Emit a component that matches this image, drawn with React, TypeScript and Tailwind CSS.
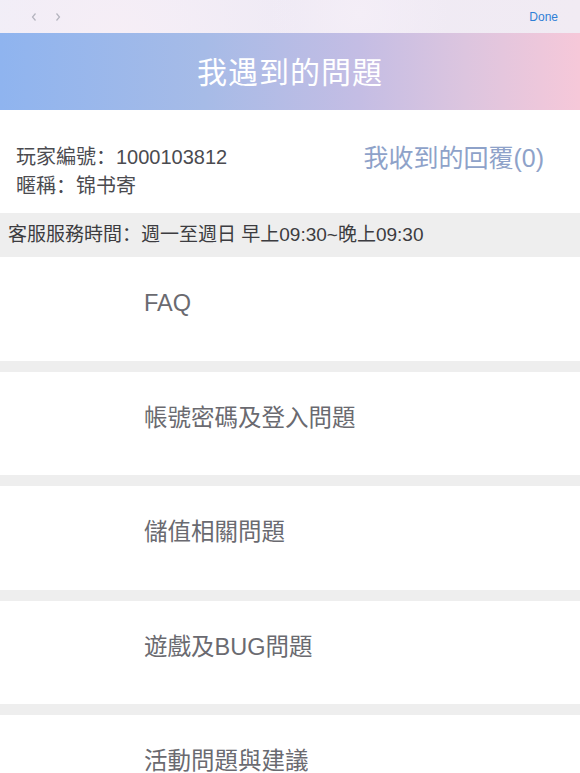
import React from 'react';

const font = "font-['Liberation_Sans','Noto_Sans_CJK_SC',sans-serif]";

export default function App() {
  const topics = ['FAQ', '帳號密碼及登入問題', '儲值相關問題', '遊戲及BUG問題', '活動問題與建議'];

  return (
    <div className={`w-[580px] h-[773px] overflow-hidden bg-white ${font}`}>
      {/* browser toolbar */}
      <div className="h-[33px] flex items-center justify-between px-[30px] bg-[radial-gradient(circle_at_20%_120%,#f6eef6_0,transparent_40%),radial-gradient(circle_at_62%_40%,#f4eef7_0,transparent_25%),linear-gradient(90deg,#efeef8,#efeaf5_50%,#f1ebf3)]">
        <div className="flex items-center gap-[16px] text-[#b3b3bd]">
          <svg width="8" height="10" viewBox="0 0 8 10" fill="none" stroke="currentColor" strokeWidth="1.2">
            <path d="M5.5 1.5 L2.5 5 L5.5 8.5" />
          </svg>
          <svg width="8" height="10" viewBox="0 0 8 10" fill="none" stroke="currentColor" strokeWidth="1.2">
            <path d="M2.5 1.5 L5.5 5 L2.5 8.5" />
          </svg>
        </div>
        <span className="text-[12px] text-[#2f7fd6] mr-[-8px]">Done</span>
      </div>

      {/* title bar */}
      <div className="h-[77px] flex items-center justify-center bg-[linear-gradient(90deg,#8fb4ef_0%,#a6bbe7_35%,#c4bde4_62%,#dcc5df_80%,#f6c8d9_100%)]">
        <h1 className="text-[30px] leading-none text-white font-normal tracking-[1px] pt-[2px]">我遇到的問題</h1>
      </div>

      {/* player info */}
      <div className="h-[103px] flex justify-between pl-[16px] pr-[36px] pt-[33px]">
        <div className="text-[20px] text-[#4b4b50] leading-[29px]">
          <div>玩家編號：1000103812</div>
          <div>暱稱：锦书寄</div>
        </div>
        <div className="text-[25px] text-[#8ea2c9] leading-[30px]">我收到的回覆(0)</div>
      </div>

      {/* service hours */}
      <div className="h-[44px] flex items-center bg-[#eeeeee] pl-[8px] text-[19px] text-[#3c3c40]">
        客服服務時間：週一至週日 早上09:30~晚上09:30
      </div>

      {/* topics */}
      <div className="flex flex-col">
        {topics.map((t, i) => (
          <div key={i} className="flex flex-col">
            <div className="h-[103.5px] flex items-center pl-[144px] pb-[10px] text-[23.5px] text-[#6a6a70]">{t}</div>
            <div className="h-[11px] bg-[#eeeeee]" />
          </div>
        ))}
      </div>
    </div>
  );
}
